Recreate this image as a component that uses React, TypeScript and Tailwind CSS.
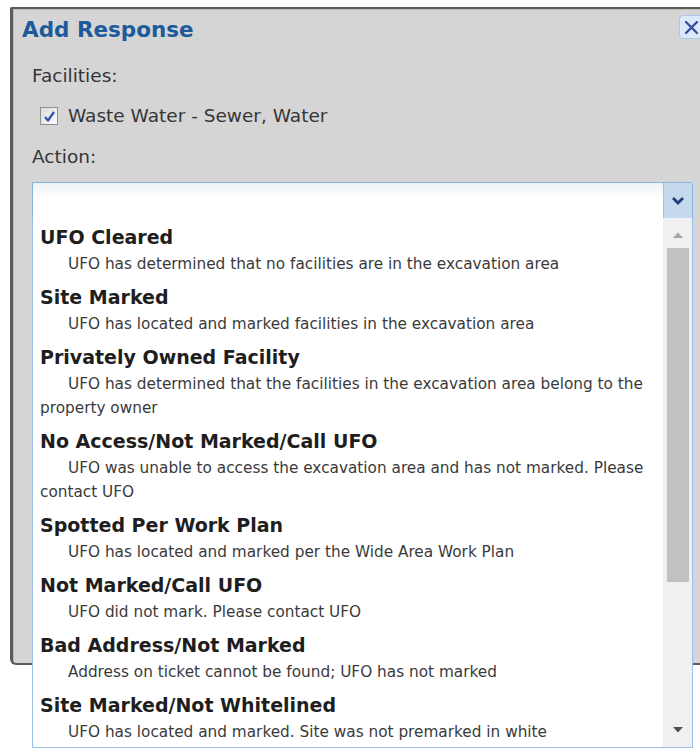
import { useState } from 'react';

type Action = { title: string; desc: string };

const actions: Action[] = [
  { title: 'UFO Cleared', desc: 'UFO has determined that no facilities are in the excavation area' },
  { title: 'Site Marked', desc: 'UFO has located and marked facilities in the excavation area' },
  {
    title: 'Privately Owned Facility',
    desc: 'UFO has determined that the facilities in the excavation area belong to the property owner',
  },
  {
    title: 'No Access/Not Marked/Call UFO',
    desc: 'UFO was unable to access the excavation area and has not marked. Please contact UFO',
  },
  { title: 'Spotted Per Work Plan', desc: 'UFO has located and marked per the Wide Area Work Plan' },
  { title: 'Not Marked/Call UFO', desc: 'UFO did not mark. Please contact UFO' },
  { title: 'Bad Address/Not Marked', desc: 'Address on ticket cannot be found; UFO has not marked' },
  { title: 'Site Marked/Not Whitelined', desc: 'UFO has located and marked. Site was not premarked in white' },
];

function CloseButton() {
  return (
    <button className="absolute left-[666px] top-[6px] w-[28px] h-[24px] rounded-[4px] border border-[#a9c7ec] bg-[#dce9f9] flex items-center pl-[4px]">
      <svg width="15" height="15" viewBox="0 0 15 15">
        <path d="M2 2 L13 13 M13 2 L2 13" stroke="#34509c" strokeWidth="2.4" strokeLinecap="round" />
      </svg>
    </button>
  );
}

function Checkbox({ checked }: { checked: boolean }) {
  return (
    <span className="w-[18px] h-[18px] border border-[#8e8f8f] bg-gradient-to-br from-[#dcdcdc] to-[#fbfbfb] flex items-center justify-center">
      {checked && (
        <svg width="13" height="13" viewBox="0 0 13 13">
          <path d="M2 7 L5 10.5 L11 2" stroke="#2f4fb4" strokeWidth="2.2" fill="none" strokeLinejoin="round" />
        </svg>
      )}
    </span>
  );
}

function ScrollBar() {
  return (
    <div className="w-[29px] bg-[#f0f0f0] flex flex-col items-center">
      <svg width="12" height="8" viewBox="0 0 12 8" className="mt-[13px]">
        <path d="M1 7 L6 1.5 L11 7 Z" fill="#a6a6a6" />
      </svg>
      <div className="mt-[9px] w-[22px] h-[334px] bg-[#c1c1c1]" />
      <div className="flex-1" />
      <svg width="12" height="8" viewBox="0 0 12 8" className="mb-[13px]">
        <path d="M1 1 L6 6.5 L11 1 Z" fill="#505050" />
      </svg>
    </div>
  );
}

function ActionList() {
  return (
    <div className="absolute left-[-1px] top-full w-[661px] h-[530px] bg-white border-x border-b border-[#98c0e8] flex">
      <div className="flex-1 overflow-hidden pl-[7px] pr-[4px] pt-[4px]">
        {actions.map((a) => (
          <div key={a.title} className="pb-[6px]">
            <div className="text-[19px] leading-[30px] font-bold text-[#1e1e1e] whitespace-nowrap">{a.title}</div>
            <div className="text-[15.3px] leading-[24px] text-[#3a3a3a] indent-[28px]">{a.desc}</div>
          </div>
        ))}
      </div>
      <ScrollBar />
    </div>
  );
}

export default function App() {
  const [waste, setWaste] = useState(true);

  return (
    <div className="relative w-[700px] h-[749px] bg-white overflow-hidden" style={{ fontFamily: '"DejaVu Sans", Verdana, sans-serif' }}>
      {/* dialog */}
      <div className="relative ml-[10px] mt-[7px] w-[720px] h-[658px] bg-[#d5d5d5] border-t-2 border-l-[3px] border-b-2 border-[#5c5c5c] rounded-bl-[6px] rounded-tl-[2px] shadow-[inset_1px_1px_0_#bcbcbc]">
        <CloseButton />
        <div className="pl-[9px] h-[41px] leading-[41px] text-[21.5px] font-bold text-[#1d5a9c]">Add Response</div>

        <div className="pl-[19px] text-[18.5px] text-[#353535]">
          <div className="mt-[11px] leading-[30px]">Facilities:</div>
          <label className="mt-[10px] h-[30px] pl-[8px] flex items-center gap-[10px]" onClick={() => setWaste(!waste)}>
            <Checkbox checked={waste} />
            <span>Waste Water - Sewer, Water</span>
          </label>
          <div className="mt-[11px] leading-[30px]">Action:</div>

          {/* action combo */}
          <div className="relative mt-[10px] w-[661px] h-[37px] border border-[#8ab4df] rounded-tr-[3px] bg-gradient-to-b from-[#eef1f5] to-white to-40% flex">
            <div className="flex-1" />
            <div className="w-[29px] bg-[#c4d8ee] border-l border-[#a3c2e4] rounded-tr-[2px] flex items-center justify-center">
              <svg width="14" height="9" viewBox="0 0 14 9">
                <path d="M2 2 L7 7 L12 2" stroke="#1f3b78" strokeWidth="2.8" fill="none" />
              </svg>
            </div>
            <ActionList />
          </div>
        </div>
      </div>
    </div>
  );
}
